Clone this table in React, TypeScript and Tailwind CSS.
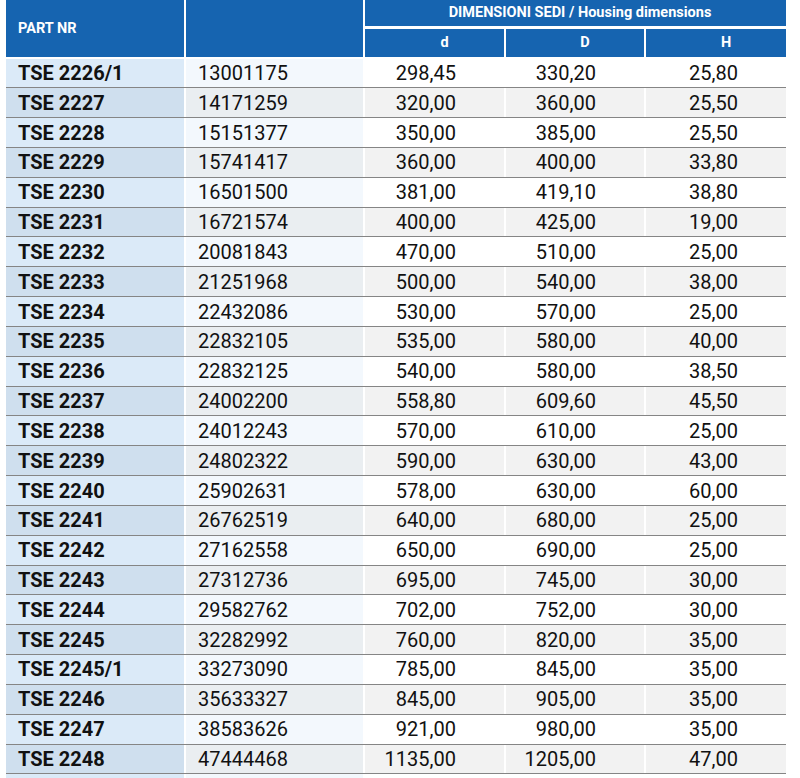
const rows: [string, string, string, string, string][] = [
  ["TSE 2226/1", "13001175", "298,45", "330,20", "25,80"],
  ["TSE 2227", "14171259", "320,00", "360,00", "25,50"],
  ["TSE 2228", "15151377", "350,00", "385,00", "25,50"],
  ["TSE 2229", "15741417", "360,00", "400,00", "33,80"],
  ["TSE 2230", "16501500", "381,00", "419,10", "38,80"],
  ["TSE 2231", "16721574", "400,00", "425,00", "19,00"],
  ["TSE 2232", "20081843", "470,00", "510,00", "25,00"],
  ["TSE 2233", "21251968", "500,00", "540,00", "38,00"],
  ["TSE 2234", "22432086", "530,00", "570,00", "25,00"],
  ["TSE 2235", "22832105", "535,00", "580,00", "40,00"],
  ["TSE 2236", "22832125", "540,00", "580,00", "38,50"],
  ["TSE 2237", "24002200", "558,80", "609,60", "45,50"],
  ["TSE 2238", "24012243", "570,00", "610,00", "25,00"],
  ["TSE 2239", "24802322", "590,00", "630,00", "43,00"],
  ["TSE 2240", "25902631", "578,00", "630,00", "60,00"],
  ["TSE 2241", "26762519", "640,00", "680,00", "25,00"],
  ["TSE 2242", "27162558", "650,00", "690,00", "25,00"],
  ["TSE 2243", "27312736", "695,00", "745,00", "30,00"],
  ["TSE 2244", "29582762", "702,00", "752,00", "30,00"],
  ["TSE 2245", "32282992", "760,00", "820,00", "35,00"],
  ["TSE 2245/1", "33273090", "785,00", "845,00", "35,00"],
  ["TSE 2246", "35633327", "845,00", "905,00", "35,00"],
  ["TSE 2247", "38583626", "921,00", "980,00", "35,00"],
  ["TSE 2248", "47444468", "1135,00", "1205,00", "47,00"],
];

export default function App() {
  return (
    <div className="min-h-screen bg-white pl-[6px] font-['Roboto','Liberation_Sans',sans-serif] text-[#111]">
      <div className="w-[780px]">
        {/* header */}
        <div className="mb-[1.5px] grid grid-cols-[178px_177px_139px_138px_140px] grid-rows-[26px_28.5px] gap-x-[2px] gap-y-[2.5px] text-[14.5px] font-bold text-white">
          <div className="row-span-2 flex items-center bg-[#1664b0] pl-[12px]">
            PART NR
          </div>
          <div className="row-span-2 bg-[#1664b0]" />
          <div className="col-span-3 flex items-center justify-center bg-[#1664b0] pl-[9px]">
            DIMENSIONI SEDI / Housing dimensions
          </div>
          <div className="flex items-center justify-center bg-[#1664b0] pl-[20px]">
            d
          </div>
          <div className="flex items-center justify-center bg-[#1664b0] pl-[20px]">
            D
          </div>
          <div className="flex items-center justify-center bg-[#1664b0] pl-[20px]">
            H
          </div>
        </div>

        {/* body */}
        {[...rows, null].map((row, i) => {
          const odd = i % 2 === 0;
          return (
            <div
              key={i}
              className="grid h-[29.83px] grid-cols-[178px_177px_139px_138px_140px] gap-x-[2px] border-b-[1.5px] border-[#858585] bg-white text-[20px] leading-none"
            >
              <div
                className={`flex items-center pl-[12px] font-bold ${
                  odd ? "bg-[#dbeaf8]" : "bg-[#cfdfee]"
                }`}
              >
                {row?.[0]}
              </div>
              <div
                className={`flex items-center pl-[12px] ${
                  odd ? "bg-[#f3f8fd]" : "bg-[#eaeef1]"
                }`}
              >
                {row?.[1]}
              </div>
              {[2, 3, 4].map((c) => (
                <div
                  key={c}
                  className={`flex items-center justify-end pr-[48px] ${
                    odd ? "bg-white" : "bg-[#f2f2f2]"
                  }`}
                >
                  {row?.[c]}
                </div>
              ))}
            </div>
          );
        })}
      </div>
    </div>
  );
}
